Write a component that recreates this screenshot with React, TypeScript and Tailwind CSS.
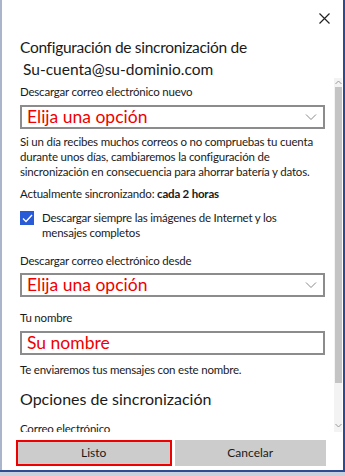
import React from "react";

const font = { fontFamily: 'Lato, "Noto Sans", sans-serif' };

function Chevron() {
  return (
    <svg width="12" height="8" viewBox="0 0 12 8" className="mr-[4px]">
      <path d="M1 1.5 L6 6.5 L11 1.5" fill="none" stroke="#8a8a8a" strokeWidth="1" />
    </svg>
  );
}

function SelectBox({ text }: { text: string }) {
  return (
    <div className="flex h-[24px] items-center justify-between border-2 border-[#8c8c8c] pl-[5px] pr-[2px]">
      <span className="text-[17.5px] leading-[20px] tracking-normal text-[#f00000]">{text}</span>
      <Chevron />
    </div>
  );
}

export default function App() {
  return (
    <div className="relative flex h-[476px] w-[345px] flex-col overflow-hidden bg-white text-[#1a1a1a]" style={font}>
      <div className="flex min-h-0 flex-1">
        <div className="w-[2px] bg-[#aab5cb]" />
        <div className="flex min-w-0 flex-1 flex-col">
          <div className="flex h-[24px] items-end justify-end pr-[13px]">
            <svg width="11" height="11" viewBox="0 0 11 11">
              <path d="M0.5 0.5 L10.5 10.5 M10.5 0.5 L0.5 10.5" stroke="#222" strokeWidth="1.2" />
            </svg>
          </div>
          <div className="flex min-h-0 flex-1">
            <div className="flex h-[408px] min-w-0 flex-1 flex-col overflow-hidden pl-[18px] pr-[9px] text-[11.5px] leading-[15px] tracking-[-0.2px]">
              <div className="mt-[12px] text-[15.5px] leading-[22px] tracking-[-0.3px]">
                <div>Configuración de sincronización de</div>
                <div className="pl-[3px] tracking-normal">Su-cuenta@su-dominio.com</div>
              </div>
              <div className="mt-[4px]">Descargar correo electrónico nuevo</div>
              <div className="mt-[6px]">
                <SelectBox text="Elija una opción" />
              </div>
              <div className="mt-[5px]">
                Si un día recibes muchos correos o no compruebas tu cuenta durante unos días, cambiaremos la configuración de sincronización en consecuencia para ahorrar batería y datos.
              </div>
              <div className="mt-[7px]">
                Actualmente sincronizando: <span className="font-bold">cada 2 horas</span>
              </div>
              <div className="mt-[9px] flex gap-[8px]">
                <div className="mt-[1px] flex h-[14px] w-[14px] shrink-0 items-center justify-center bg-[#2a5bd7]">
                  <svg width="11" height="9" viewBox="0 0 11 9">
                    <path d="M1 4.5 L4 7.5 L10 1" fill="none" stroke="white" strokeWidth="1.3" />
                  </svg>
                </div>
                <div className="pr-[20px]">Descargar siempre las imágenes de Internet y los mensajes completos</div>
              </div>
              <div className="mt-[13px]">Descargar correo electrónico desde</div>
              <div className="mt-[5px]">
                <SelectBox text="Elija una opción" />
              </div>
              <div className="mt-[13px]">Tu nombre</div>
              <div className="mt-[6px] flex h-[24px] items-center border-2 border-[#8c8c8c] pl-[5px]">
                <span className="text-[17.5px] leading-[20px] tracking-normal text-[#f00000]">Su nombre</span>
              </div>
              <div className="mt-[7px]">Te enviaremos tus mensajes con este nombre.</div>
              <div className="mt-[11px] text-[16px] leading-[22px] tracking-normal">Opciones de sincronización</div>
              <div className="mt-[11px]">Correo electrónico</div>
            </div>
            <div className="mt-[54px] flex h-[354px] w-[8px] flex-col items-center bg-[#f3f3f3]">
              <svg width="7" height="5" viewBox="0 0 7 5" className="mt-[2px]">
                <path d="M0.5 4 L3.5 1 L6.5 4" fill="none" stroke="#999" strokeWidth="1" />
              </svg>
              <div className="mt-[2px] h-[296px] w-[7px] bg-[#c4c4c4]" />
              <div className="flex-1" />
              <svg width="7" height="5" viewBox="0 0 7 5" className="mb-[4px]">
                <path d="M0.5 1 L3.5 4 L6.5 1" fill="none" stroke="#999" strokeWidth="1" />
              </svg>
            </div>
            <div className="w-[1px]" />
          </div>
          <div className="mt-[7px] flex h-[26px] gap-[3px] pl-[14px] pr-[17px] text-[12px]">
            <button className="flex flex-1 items-center justify-center border-2 border-[#ee0000] bg-[#cccccc]">Listo</button>
            <button className="flex flex-1 items-center justify-center bg-[#cccccc]">Cancelar</button>
          </div>
          <div className="h-[4px]" />
        </div>
        <div className="w-[2px] bg-[#2b4c93]" />
      </div>
      <div className="h-[2px] bg-[#2b4c93]" />
      <div className="h-[4px] bg-[#c9d0dd]" />
    </div>
  );
}
